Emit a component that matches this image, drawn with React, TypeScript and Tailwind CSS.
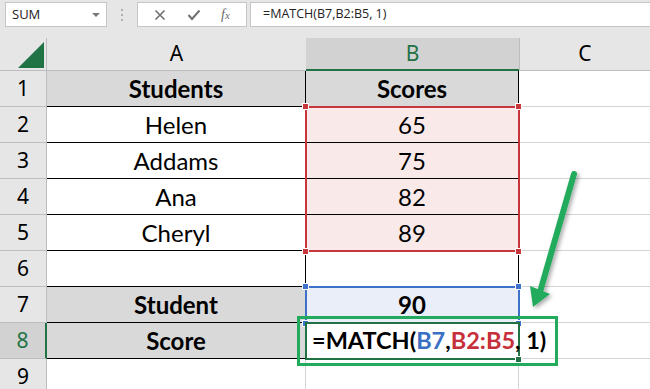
import React from "react";

const rows = [
  { n: 1, a: "Students", b: "Scores", kind: "head" },
  { n: 2, a: "Helen", b: "65", kind: "data" },
  { n: 3, a: "Addams", b: "75", kind: "data" },
  { n: 4, a: "Ana", b: "82", kind: "data" },
  { n: 5, a: "Cheryl", b: "89", kind: "data" },
  { n: 6, a: "", b: "", kind: "blank" },
  { n: 7, a: "Student", b: "90", kind: "label" },
  { n: 8, a: "Score", b: "", kind: "edit" },
];

function Handle({ className }: { className: string }) {
  return <div className={`absolute w-[7px] h-[7px] border border-white ${className}`} />;
}

export default function App() {
  return (
    <div className="relative w-[650px] h-[389px] overflow-hidden bg-white font-['Lato',sans-serif] text-black">
      {/* formula bar */}
      <div className="h-[38px] bg-[#e6e6e6] flex items-start pt-[2px] pl-[5px] gap-0">
        <div className="w-[102px] h-[25px] bg-white border border-[#c6c6c6] flex items-center justify-between pl-[6px] pr-[6px] font-['Open_Sans',sans-serif] text-[13px] text-[#222]">
          <span>SUM</span>
          <span className="w-0 h-0 border-l-[4px] border-r-[4px] border-t-[4px] border-l-transparent border-r-transparent border-t-[#7a7a7a]" />
        </div>
        <div className="w-[30px] h-[25px] flex flex-col items-center justify-center gap-[3px]">
          <span className="w-[2px] h-[2px] bg-[#b0b0b0]" />
          <span className="w-[2px] h-[2px] bg-[#b0b0b0]" />
          <span className="w-[2px] h-[2px] bg-[#b0b0b0]" />
        </div>
        <div className="w-[110px] h-[25px] bg-white border border-[#c6c6c6] flex items-center justify-around px-[6px] text-[#6b6b6b]">
          <svg width="12" height="12" viewBox="0 0 12 12">
            <path d="M1.5 1.5 L10.5 10.5 M10.5 1.5 L1.5 10.5" stroke="#707070" strokeWidth="1.6" />
          </svg>
          <svg width="14" height="12" viewBox="0 0 14 12">
            <path d="M1.5 6 L5 10 L12.5 1.5" stroke="#707070" strokeWidth="2" fill="none" />
          </svg>
          <span className="font-['Liberation_Serif',serif] italic text-[14px] text-[#6b6b6b] leading-none">
            f<span className="text-[11px]">x</span>
          </span>
        </div>
        <div className="ml-[3px] flex-1 h-[25px] bg-white border border-[#c6c6c6] border-r-0 flex items-center pl-[12px] font-['Open_Sans',sans-serif] text-[12.5px] text-[#222]">
          =MATCH(B7,B2:B5, 1)
        </div>
      </div>

      {/* grid */}
      <div className="grid grid-cols-[47px_259px_213px_131px] grid-rows-[33px_repeat(8,36px)_36px] bg-[#e6e6e6]">
        {/* column headers */}
        <div className="relative border-r border-b border-[#bdbdbd] bg-[#e6e6e6]">
          <svg className="absolute left-[18px] top-[4px]" width="26" height="26" viewBox="0 0 26 26">
            <polygon points="0,26 26,0 26,26" fill="#217346" />
          </svg>
        </div>
        <div className="border-b border-[#bdbdbd] flex items-center justify-center font-['Noto_Sans',sans-serif] text-[21px]">A</div>
        <div className="bg-[#d2d2d2] border-b-2 border-[#217346] flex items-center justify-center font-['Noto_Sans',sans-serif] text-[21px] text-[#217346]">B</div>
        <div className="border-b border-l border-[#bdbdbd] flex items-center justify-center font-['Noto_Sans',sans-serif] text-[21px]">C</div>

        {rows.map((r) => {
          const aBg = r.kind === "head" || r.kind === "label" || r.kind === "edit" ? "bg-[#d9d9d9]" : "bg-white";
          const bBg =
            r.kind === "head"
              ? "bg-[#d9d9d9]"
              : r.kind === "data"
              ? "bg-[#f9e9e9]"
              : r.kind === "label"
              ? "bg-[#e9eef8]"
              : "bg-white";
          const bold = r.kind === "head" || r.kind === "label" || r.kind === "edit" ? "font-bold" : "";
          const sel = r.n === 8;
          return (
            <React.Fragment key={r.n}>
              <div
                className={`flex items-center justify-center border-b border-[#bdbdbd] font-['Noto_Sans',sans-serif] text-[21px] ${
                  sel ? "bg-[#d2d2d2] border-r-2 border-r-[#217346] text-[#217346]" : "bg-[#e6e6e6] border-r border-r-[#bdbdbd]"
                }`}
              >
                {r.n}
              </div>
              <div className={`flex items-center justify-center border-b border-r border-black text-[24px] ${aBg} ${bold}`}>{r.a}</div>
              <div className={`flex items-center justify-center border-b border-r border-black text-[24px] ${bBg} ${bold}`}>{r.b}</div>
              <div className="bg-white border-b border-[#d4d4d4]" />
            </React.Fragment>
          );
        })}

        <div className="flex items-start justify-center pt-[2px] bg-[#e6e6e6] border-r border-[#bdbdbd] font-['Noto_Sans',sans-serif] text-[21px]">9</div>
        <div className="bg-white border-r border-[#d4d4d4]" />
        <div className="bg-white border-r border-[#d4d4d4]" />
        <div className="bg-white" />
      </div>

      {/* red range B2:B5 */}
      <div className="absolute left-[305px] top-[106px] w-[215px] h-[146px] border-2 border-[#c6373c] pointer-events-none" />
      <Handle className="left-[302px] top-[103px] bg-[#c6373c]" />
      <Handle className="left-[515px] top-[103px] bg-[#c6373c]" />
      <Handle className="left-[302px] top-[248px] bg-[#c6373c]" />
      <Handle className="left-[515px] top-[248px] bg-[#c6373c]" />

      {/* blue range B7 */}
      <div className="absolute left-[305px] top-[286px] w-[215px] h-[38px] border-2 border-[#3c72c8] pointer-events-none" />
      <Handle className="left-[302px] top-[283px] bg-[#3c72c8]" />
      <Handle className="left-[515px] top-[283px] bg-[#3c72c8]" />
      <Handle className="left-[302px] top-[320px] bg-[#3c72c8]" />
      <Handle className="left-[515px] top-[320px] bg-[#3c72c8]" />

      {/* active cell B8 */}
      <div className="absolute left-[305px] top-[322px] w-[215px] h-[38px] border-2 border-[#217346] bg-white flex items-center pl-[5px]">
        <span className="font-bold text-[23.5px] leading-none whitespace-nowrap">
          =MATCH(<span className="text-[#3b6fc4]">B7</span>,<span className="text-[#c6303b]">B2:B5</span>, 1)
        </span>
        <span className="ml-[3px] w-[1px] h-[24px] bg-black" />
      </div>
      <Handle className="left-[515px] top-[356px] bg-[#217346]" />

      {/* annotation box */}
      <div className="absolute left-[297px] top-[316px] w-[261px] h-[50px] border-[3px] border-[#22ab5c] pointer-events-none" />

      {/* arrow */}
      <svg className="absolute left-0 top-0 pointer-events-none" width="650" height="389" viewBox="0 0 650 389">
        <defs>
          <filter id="sh" x="-50%" y="-50%" width="200%" height="200%">
            <feDropShadow dx="2" dy="2" stdDeviation="2" floodColor="#000" floodOpacity="0.35" />
          </filter>
        </defs>
        <g filter="url(#sh)">
          <line x1="574" y1="174" x2="540" y2="292" stroke="#22ab5c" strokeWidth="6" strokeLinecap="round" />
          <polygon points="530,286 550,294 533,307" fill="#22ab5c" />
        </g>
      </svg>
    </div>
  );
}
